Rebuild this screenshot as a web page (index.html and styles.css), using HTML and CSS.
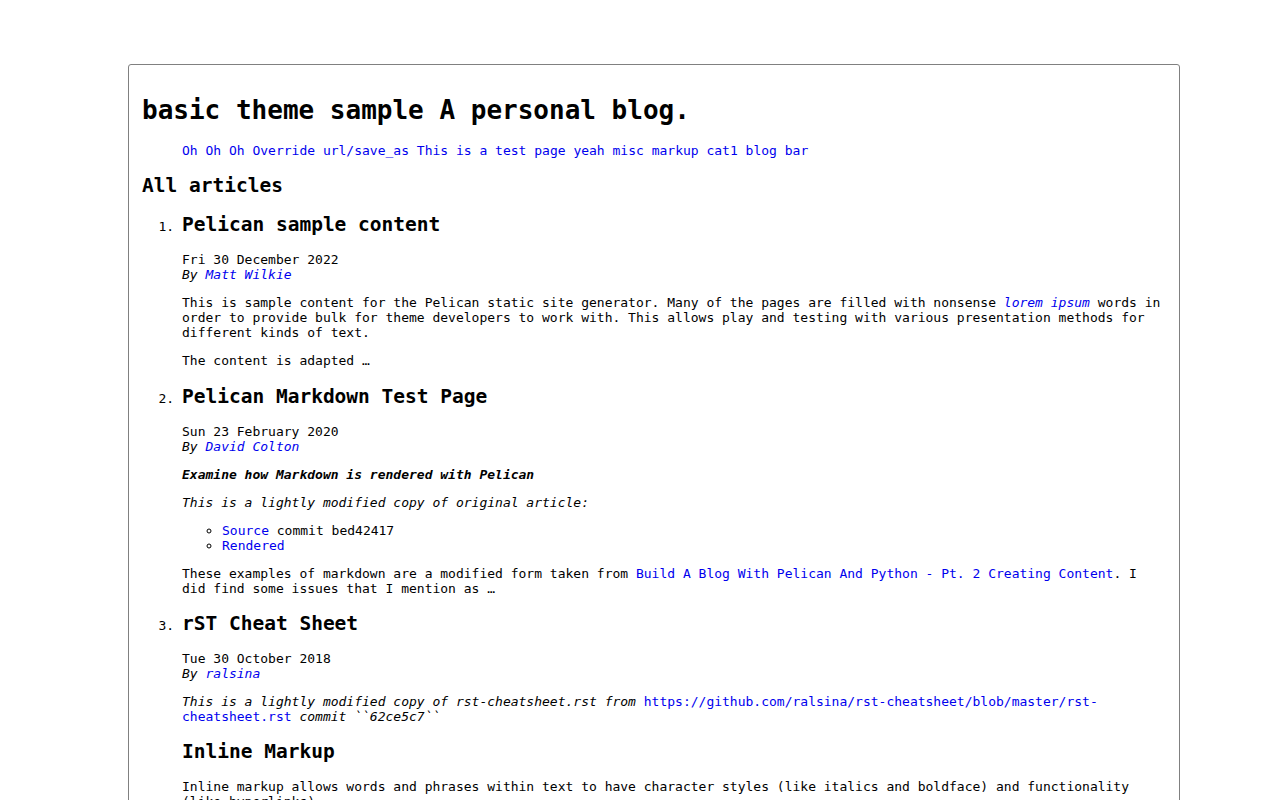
FILE: index.html
```html
<!DOCTYPE html>
<html lang="en">
<head>
<meta charset="utf-8">
<title>basic theme sample</title>
<link rel="stylesheet" href="styles.css">
</head>
<body>
<div class="page">
  <header class="banner">
    <h1 class="site-title">basic theme sample <strong>A personal blog.</strong></h1>
    <nav class="menu">
      <ul class="menu-list">
        <li class="menu-item"><a href="#">Oh Oh Oh</a></li>
        <li class="menu-item"><a href="#">Override url/save_as</a></li>
        <li class="menu-item"><a href="#">This is a test page</a></li>
        <li class="menu-item"><a href="#">yeah</a></li>
        <li class="menu-item"><a href="#">misc</a></li>
        <li class="menu-item"><a href="#">markup</a></li>
        <li class="menu-item"><a href="#">cat1</a></li>
        <li class="menu-item"><a href="#">blog</a></li>
        <li class="menu-item"><a href="#">bar</a></li>
      </ul>
    </nav>
  </header>
  <section class="content">
    <h2 class="section-title">All articles</h2>
    <ol class="article-list">
      <li class="article">
        <h2 class="entry-title"><a class="entry-link" href="#">Pelican sample content</a></h2>
        <footer class="post-info">
          <time class="published">Fri 30 December 2022</time>
          <address class="author">By <a href="#">Matt Wilkie</a></address>
        </footer>
        <div class="entry-content">
          <p>This is sample content for the Pelican static site generator. Many of the pages are filled with nonsense <a href="#"><em>lorem ipsum</em></a> words in order to provide bulk for theme developers to work with. This allows play and testing with various presentation methods for different kinds of text.</p>
          <p>The content is adapted …</p>
        </div>
      </li>
      <li class="article">
        <h2 class="entry-title"><a class="entry-link" href="#">Pelican Markdown Test Page</a></h2>
        <footer class="post-info">
          <time class="published">Sun 23 February 2020</time>
          <address class="author">By <a href="#">David Colton</a></address>
        </footer>
        <div class="entry-content">
          <p><strong><em>Examine how Markdown is rendered with Pelican</em></strong></p>
          <p><em>This is a lightly modified copy of original article:</em></p>
          <ul class="sub-list">
            <li><a href="#">Source</a> commit bed42417</li>
            <li><a href="#">Rendered</a></li>
          </ul>
          <p>These examples of markdown are a modified form taken from <a href="#">Build A Blog With Pelican And Python - Pt. 2 Creating Content</a>. I did find some issues that I mention as …</p>
        </div>
      </li>
      <li class="article">
        <h2 class="entry-title"><a class="entry-link" href="#">rST Cheat Sheet</a></h2>
        <footer class="post-info">
          <time class="published">Tue 30 October 2018</time>
          <address class="author">By <a href="#">ralsina</a></address>
        </footer>
        <div class="entry-content">
          <p><em>This is a lightly modified copy of rst-cheatsheet.rst from</em> <a href="#">https://github.com/ralsina/rst-cheatsheet/blob/master/rst-cheatsheet.rst</a> <em>commit ``62ce5c7``</em></p>
          <h2 class="content-heading">Inline Markup</h2>
          <p>Inline markup allows words and phrases within text to have character styles (like italics and boldface) and functionality (like hyperlinks).</p>
          <p>Text can be emphasized, strongly emphasized, or shown as literal code.</p>
        </div>
      </li>
    </ol>
  </section>
</div>
</body>
</html>
```

FILE: styles.css
```css
html {
  background: #ffffff;
}

body {
  margin: 0;
  font-family: "DejaVu Sans Mono", monospace;
  font-size: 13px;
  color: #000000;
}

.page {
  margin: 64px 100px 0 128px;
  padding: 13px 13px 40px 13px;
  border: 1px solid #808080;
  border-radius: 3px;
}

a {
  color: #0000ee;
  text-decoration: none;
}

.site-title {
  font-size: 26px;
  margin: 17.4px 0;
  font-weight: bold;
}

.site-title strong {
  font-weight: bold;
}

.menu-list {
  margin: 13px 0;
  padding-left: 40px;
  list-style: none;
}

.menu-item {
  display: inline;
}

.section-title,
.entry-title,
.content-heading {
  font-size: 19.5px;
  margin: 16.2px 0;
  font-weight: bold;
}

.entry-link {
  color: #000000;
}

.article-list {
  margin: 13px 0;
  padding-left: 40px;
}

.post-info {
  display: block;
}

.author {
  font-style: italic;
}

.entry-content p {
  margin: 13px 0;
}

.sub-list {
  margin: 13px 0;
  padding-left: 40px;
  list-style: circle;
}
```
